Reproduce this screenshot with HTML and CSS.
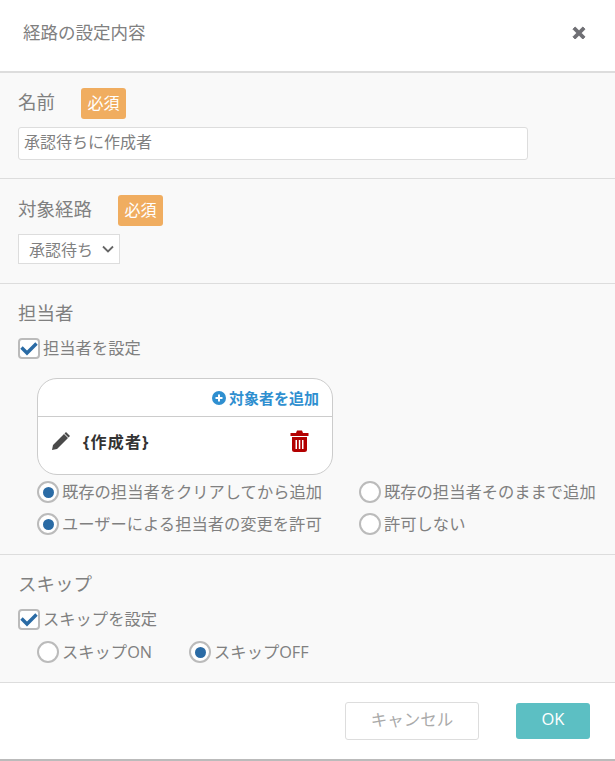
FILE: index.html
```html
<!DOCTYPE html>
<html lang="ja">
<head>
    <meta charset="UTF-8">
    <title>経路の設定内容</title>
    <link rel="stylesheet" href="styles.css">
</head>
<body>
    <div class="dialog">
        <div class="dialog-header">
            <span class="dialog-title">経路の設定内容</span>
            <svg class="close-icon" viewBox="0 0 14 14" width="14" height="14">
                <path d="M3.2 1 7 4.8 10.800 1 13 3.200 9.200 7 13 10.800 10.800 13 7 9.200 3.200 13 1 10.800 4.800 7 1 3.200Z" fill="#6f6f74" stroke="#6f6f74" stroke-linejoin="round"/>
            </svg>
        </div>

        <div class="section section-name">
            <div class="label-row">
                <span class="section-label">名前</span>
                <span class="required">必須</span>
            </div>
            <input class="text-input" type="text" value="承認待ちに作成者">
        </div>

        <div class="section section-route">
            <div class="label-row">
                <span class="section-label">対象経路</span>
                <span class="required">必須</span>
            </div>
            <div class="select-box">
                <span>承認待ち</span>
                <svg viewBox="0 0 12 8" width="12" height="8">
                    <path d="M1 1.500 6 6.500l5-5" fill="none" stroke="#666" stroke-width="1.800"/>
                </svg>
            </div>
        </div>

        <div class="section section-owner">
            <div class="section-label">担当者</div>
            <label class="check-row">
                <span class="checkbox">
                    <svg viewBox="0 0 18 18" width="18" height="18"><path d="M1.500 8.500 7 14 16.500 4.500" fill="none" stroke="#2a6ba5" stroke-width="3.400"/></svg>
                </span>
                担当者を設定
            </label>
            <div class="target-box">
                <div class="target-head">
                    <svg viewBox="0 0 14 14" width="14" height="14">
                        <circle cx="7" cy="7" r="7" fill="#2f8fd0"/>
                        <path d="M3.500 7h7M7 3.500v7" stroke="#fff" stroke-width="2"/>
                    </svg>
                    <span class="add-link">対象者を追加</span>
                </div>
                <div class="target-row">
                    <svg class="pencil" viewBox="0 0 20 20" width="20" height="20">
                        <path d="M15 1 19 5 17.500 6.500 13.500 2.500ZM13 3 17 7 6 18 1 19 2 14Z" fill="#4a4a4a"/>
                    </svg>
                    <span class="target-name">{作成者}</span>
                    <svg class="trash" viewBox="0 0 19 22" width="19" height="22">
                        <path d="M6 3 7 .5h5L13 3h5.500v3H.5V3ZM2 7h15v12.500a2.500 2.500 0 0 1-2.500 2.500h-10A2.500 2.500 0 0 1 2 19.500ZM5.500 10v9h1.500v-9ZM8.800 10v9h1.500v-9ZM12 10v9h1.500v-9Z" fill="#b30000" fill-rule="evenodd"/>
                    </svg>
                </div>
            </div>
            <div class="radio-grid">
                <label class="radio-row"><span class="radio on"></span>既存の担当者をクリアしてから追加</label>
                <label class="radio-row"><span class="radio"></span>既存の担当者そのままで追加</label>
                <label class="radio-row"><span class="radio on"></span>ユーザーによる担当者の変更を許可</label>
                <label class="radio-row"><span class="radio"></span>許可しない</label>
            </div>
        </div>

        <div class="section section-skip">
            <div class="section-label">スキップ</div>
            <label class="check-row">
                <span class="checkbox">
                    <svg viewBox="0 0 18 18" width="18" height="18"><path d="M1.500 8.500 7 14 16.500 4.500" fill="none" stroke="#2a6ba5" stroke-width="3.400"/></svg>
                </span>
                スキップを設定
            </label>
            <div class="skip-options">
                <label class="radio-row"><span class="radio"></span>スキップON</label>
                <label class="radio-row"><span class="radio on"></span>スキップOFF</label>
            </div>
        </div>

        <div class="dialog-footer">
            <button class="btn btn-cancel">キャンセル</button>
            <button class="btn btn-ok">OK</button>
        </div>
    </div>
</body>
</html>
```

FILE: styles.css
```css
body {
    margin: 0;
    background: #fff;
    font-family: "Open Sans", "Noto Sans CJK JP", sans-serif;
    color: #808080;
}

.dialog {
    width: 615px;
    height: 761px;
    box-sizing: border-box;
    border-bottom: 2px solid #bbb;
    overflow: hidden;
}

.dialog-header {
    height: 73px;
    box-sizing: border-box;
    padding: 0 29px 5px 23px;
    display: flex;
    align-items: center;
    justify-content: space-between;
    border-bottom: 2px solid #ddd;
}

.dialog-title {
    font-size: 17.5px;
    padding-bottom: 4px;
}

.section {
    background: #f9f9f9;
    border-bottom: 1px solid #ddd;
    padding: 0 18px;
    box-sizing: border-box;
}

.section-name { height: 106px; padding-top: 15px; }
.section-route { height: 105px; padding-top: 16px; }
.section-owner { height: 271px; padding-top: 16px; }
.section-skip { height: 128px; padding-top: 16px; }

.label-row {
    display: flex;
    align-items: center;
    gap: 26px;
    margin-bottom: 8px;
}

.section-label {
    font-size: 18.5px;
    line-height: 26px;
}

.label-row .section-label {
    padding-bottom: 4px;
}

.required {
    width: 45px;
    height: 31px;
    box-sizing: border-box;
    padding-bottom: 3px;
    border-radius: 3px;
    background: #f0ad60;
    color: #fff;
    font-size: 16px;
    display: flex;
    align-items: center;
    justify-content: center;
}

.text-input {
    display: block;
    width: 510px;
    height: 33px;
    box-sizing: border-box;
    padding: 0 5px 5px;
    background: #fff;
    border: 1px solid #ddd;
    border-radius: 3px;
    font: inherit;
    font-size: 16px;
    color: #808080;
}

.select-box {
    width: 102px;
    height: 30px;
    box-sizing: border-box;
    background: #fff;
    border: 1px solid #ddd;
    padding: 0 5px 0 10px;
    display: flex;
    align-items: center;
    justify-content: space-between;
    font-size: 16px;
}

.check-row {
    display: flex;
    align-items: center;
    font-size: 16.3px;
    line-height: 24px;
    margin-top: 10px;
}

.checkbox {
    width: 22px;
    height: 21px;
    box-sizing: border-box;
    background: #fff;
    border: 2px solid #bbb;
    border-radius: 4px;
    margin-right: 3px;
    display: flex;
    align-items: center;
    justify-content: center;
}

.target-box {
    width: 296px;
    height: 97px;
    box-sizing: border-box;
    margin: 18px 0 0 19px;
    background: #fff;
    border: 1px solid #ccc;
    border-radius: 20px;
}

.target-head {
    height: 38px;
    box-sizing: border-box;
    padding-right: 13px;
    border-bottom: 1px solid #ccc;
    display: flex;
    align-items: center;
    justify-content: flex-end;
    gap: 3px;
}

.add-link {
    font-size: 15px;
    font-weight: 700;
    color: #2f8fd0;
}

.target-row {
    display: flex;
    align-items: center;
    padding: 7px 23px 17px 13px;
    height: 58px;
    box-sizing: border-box;
}

.target-name {
    margin-left: 12px;
    font-size: 16px;
    font-weight: 700;
    letter-spacing: 1.2px;
    color: #333;
    flex: 1;
}

.radio-grid {
    display: grid;
    grid-template-columns: 322px auto;
    row-gap: 4px;
    margin: 3px 0 0 19px;
}

.radio-row {
    display: flex;
    align-items: center;
    font-size: 16.3px;
    line-height: 28px;
}

.radio {
    width: 22px;
    height: 22px;
    box-sizing: border-box;
    background: #fff;
    border: 2px solid #bbb;
    border-radius: 50%;
    margin-right: 3px;
    display: flex;
    align-items: center;
    justify-content: center;
}

.radio.on::after {
    content: '';
    width: 11px;
    height: 11px;
    border-radius: 50%;
    background: #2a6ba5;
}

.skip-options {
    display: flex;
    gap: 37px;
    margin: 7px 0 0 19px;
}

.dialog-footer {
    display: flex;
    justify-content: flex-end;
    gap: 37px;
    padding: 19px 25px 0 0;
}

.btn {
    height: 38px;
    box-sizing: border-box;
    padding: 0 0 5px;
    border-radius: 3px;
    font: inherit;
    font-size: 16.5px;
}

.btn-cancel {
    width: 134px;
    background: #fff;
    border: 1px solid #ddd;
    color: #aaa;
}

.btn-ok {
    width: 74px;
    height: 36px;
    margin-top: 1px;
    background: #5cbfc3;
    border: none;
    color: #fff;
}
```
